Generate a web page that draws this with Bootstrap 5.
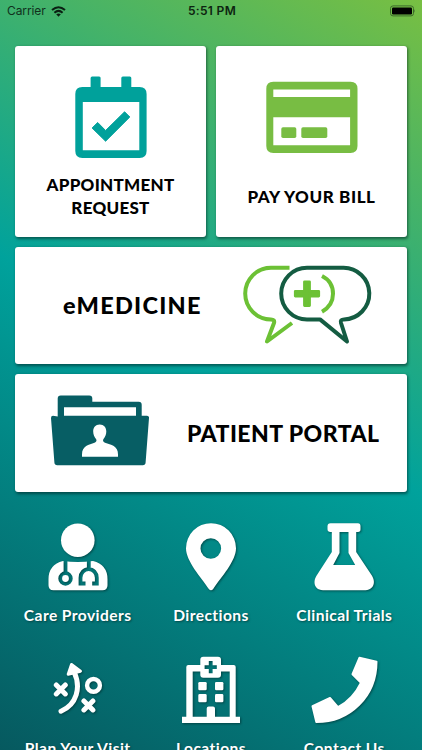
<!DOCTYPE html>
<html lang="en">
<head>
<meta charset="utf-8">
<meta name="viewport" content="width=device-width, initial-scale=1">
<title>Patient App</title>
<link href="https://cdn.jsdelivr.net/npm/bootstrap@5.3.0/dist/css/bootstrap.min.css" rel="stylesheet">
<style>
body{font-family:Lato,"Open Sans",sans-serif;background:#00a19b}
.screen{background:linear-gradient(209.6deg,#78bf42 0%,#00a29c 50%,#06595f 100%)}
.statusbar{height:22px;font:12px/22px Inter,sans-serif;color:#10301c;padding:0 7px}
.status-side{flex:1 1 0}
.carrier{letter-spacing:-.1px}
.wifi{margin-left:5px}
.clock{font-weight:600;color:#0d2410;letter-spacing:.33px;padding-left:2px}
.tiles{padding:24px 15px 0;gap:10px}
.tile-row{gap:10px}
.tile{background:#fff;border-radius:3px;box-shadow:1px 1.5px 3px rgba(0,30,30,.55);color:#000;text-decoration:none;font-weight:900}
.tile-square{height:190.5px;font-size:17px;line-height:22.5px;padding-top:30px}
.tile-wide{height:117.5px;font-size:23px;padding:0 27.5px 0 36px}
.tile-chat{padding:0 35px 0 48px}
.chat{margin-bottom:1px}
.folder{margin-bottom:5px}
.appt{letter-spacing:.27px}
.pay{letter-spacing:.6px;padding-top:8px}
.emed{font-size:23.5px;letter-spacing:1.25px}
.portal{letter-spacing:.45px}
.menu{padding:31px 11px 0}
.entry{height:133.5px;color:#fff;text-decoration:none;font-weight:700;font-size:15.6px;line-height:20px;letter-spacing:.42px;text-shadow:1px 1px 2px rgba(0,40,40,.6)}
.entry span{margin-top:14px}
.entry svg{filter:drop-shadow(1px 1px 1.2px rgba(0,40,40,.6))}
svg{display:block;flex:none}
</style>
<script src="https://cdn.jsdelivr.net/npm/bootstrap@5.3.0/dist/js/bootstrap.bundle.min.js"></script>
</head>
<body>
<div class="screen vh-100 overflow-hidden">
  <header class="statusbar d-flex align-items-center">
    <div class="status-side d-flex align-items-center">
      <span class="carrier">Carrier</span>
      <svg class="wifi" width="15" height="11" viewBox="0 0 15 11" fill="none" stroke="#0a2012" stroke-width="2"><path d="M1 4.1Q7.5-1.6 14 4.1M3.4 6.7Q7.5 3 11.6 6.7"/><path d="M5.2 8.3Q7.5 6.5 9.8 8.3L7.5 10.7Z" fill="#0a2012" stroke="none"/></svg>
    </div>
    <div class="clock">5:51 PM</div>
    <div class="status-side d-flex justify-content-end">
      <svg width="27" height="12" viewBox="0 0 27 12"><rect x="2.5" y=".9" width="23" height="10" rx="2.5" fill="none" stroke="#3d6b2b" stroke-width="1"/><rect x="4" y="2.4" width="20" height="7" rx="1.2" fill="#000"/><path d="M26.2 4.2q1.2 1.7 0 3.4Z" fill="#3d6b2b"/></svg>
    </div>
  </header>

  <main>
    <div class="tiles d-flex flex-column">
      <div class="d-flex tile-row">
        <a href="#" class="tile tile-square w-50 d-flex flex-column align-items-center text-center">
          <svg width="72" height="82" viewBox="74.7 76 72 82"><g fill="#00a19b"><rect x="90.3" y="76.5" width="10" height="14" rx="1.5"/><rect x="121" y="76.5" width="10" height="14" rx="1.5"/><path fill-rule="evenodd" d="M82 87H139.3Q146.3 87 146.3 94V151Q146.3 158 139.3 158H82Q75 158 75 151V94Q75 87 82 87ZM82.5 102V150.3H139V102Z"/><path d="M91.8 128 97.4 122.5 105.3 130.5 124.3 111.8 129.5 117 105.3 141.2Z" stroke="#00a19b" stroke-width="1" stroke-linejoin="round"/></g></svg>
          <span class="appt mt-3">APPOINTMENT<br>REQUEST</span>
        </a>
        <a href="#" class="tile tile-square w-50 d-flex flex-column align-items-center text-center">
          <svg width="92" height="78" viewBox="265.7 76 92 78"><g fill="#78bd43"><path fill-rule="evenodd" d="M273 81.7H350.2Q357.2 81.7 357.2 88.7V146Q357.2 153 350.2 153H273Q266 153 266 146V88.7Q266 81.7 273 81.7ZM273 89.5V97H349.8V89.5ZM273 117.3V145.3H349.8V117.3Z"/><rect x="281" y="127.3" width="15" height="10.7" rx="1.7"/><rect x="301" y="127.3" width="26" height="10.7" rx="1.7"/></g></svg>
          <span class="pay mt-4">PAY YOUR BILL</span>
        </a>
      </div>
      <a href="#" class="tile tile-wide tile-chat d-flex align-items-center justify-content-between">
        <span class="emed">eMEDICINE</span>
        <svg class="chat" width="130" height="80" viewBox="242 265.5 130 80" fill="none" stroke-width="4" stroke-linejoin="round"><g stroke="#6cc135"><path d="M289.5 268.3H271A25.8 25.8 0 0 0 271 319.9Q275 320 274 323.5L267 342 292 323.5M322 276.5Q333 282 333 294.3 333 306 322 312.2"/><path d="M304.5 282.3H309.5V291.8H318.7V296.6H309.5V306H304.5V296.6H295.3V291.8H304.5Z" fill="#6cc135" stroke-width="2.8"/></g><path stroke="#145c42" d="M307 319.9H320L347 342 341 323.5Q340 319.9 344 319.9A25.8 25.8 0 0 0 343 268.3H307A25.8 25.8 0 0 0 307 319.9Z"/></svg>
      </a>
      <a href="#" class="tile tile-wide d-flex align-items-center justify-content-between">
        <svg class="folder" width="98" height="71" viewBox="51 395.5 98 71"><path fill="#075e64" fill-rule="evenodd" d="M57.7 417V399Q57.7 396 60.7 396H89.3Q92.3 396 92.3 399V402.3H138.7Q141.7 402.3 141.7 405.3V416.3H147Q149.2 416.3 149 418.5L145.6 463Q145.4 465.7 142.8 465.7H57.2Q54.6 465.7 54.4 463L51 418.5Q51 416.3 53 416.3ZM64 407.7V416.3H136V407.7Z"/><path fill="#fff" d="M99.7 425C104 425 106.3 428 106.3 432 106.3 435.5 105 437.5 103.5 439.5 102.5 441 103 442.3 105 443.3 111 445.5 118 446 118 455V457.3H82V455C82 446 89 445.5 94.5 443.3 96.5 442.3 97 441 96 439.5 94.5 437.5 93.2 435.5 93.2 432 93.2 428 95.5 425 99.7 425Z"/></svg>
        <span class="portal">PATIENT PORTAL</span>
      </a>
    </div>

    <nav class="menu row row-cols-3 g-0" aria-label="Sections">
      <a href="#" class="col entry d-flex flex-column align-items-center">
        <svg width="60" height="68" viewBox="47.5 522.8 60 68"><mask id="scope"><path fill="#fff" d="M40 515H115V600H40Z"/><g fill="none" stroke="#000" stroke-width="3.8"><circle cx="65" cy="578.3" r="5.3"/><path d="M65 558V573.5M88.3 558V568M85 583.3H80V577.5A8 8.5 0 0 1 96.3 577.5V583.3H91.7"/></g></mask><circle cx="77.3" cy="540" r="16.8" fill="#fff"/><path mask="url(#scope)" fill="#fff" d="M62.5 560.8Q77 563 92.5 560.8 107 564.5 107 579V585Q107 590 102 590H53Q48 590 48 585V579Q48 564.5 62.5 560.8Z"/></svg>
        <span>Care Providers</span>
      </a>
      <a href="#" class="col entry d-flex flex-column align-items-center">
        <svg width="52" height="68" viewBox="185 522.8 52 68"><path fill="#fff" fill-rule="evenodd" d="M211 523A25 25 0 0 1 236 548C236 561 221 577 213 589Q211 591 209 589C201 577 186 561 186 548A25 25 0 0 1 211 523ZM210.8 538A10.3 10.3 0 1 0 210.8 558.6 10.3 10.3 0 1 0 210.8 538Z"/></svg>
        <span>Directions</span>
      </a>
      <a href="#" class="col entry d-flex flex-column align-items-center">
        <svg width="60" height="68" viewBox="314.5 522.8 60 68"><path fill="#fff" fill-rule="evenodd" d="M331 523H358.5Q361 523 361 526V529Q361 531.7 358.5 531.7H356.7V551.7L372.5 575.5C377 583 373 590 366 590H323.5C316 590 312.5 583 317 575.5L332.3 551.7V531.7H331Q328 531.7 328 529V526Q328 523 331 523ZM340 531.7V552.7L333.7 564.7H355.7L349 552.7V531.7Z"/></svg>
        <span>Clinical Trials</span>
      </a>
      <a href="#" class="col entry d-flex flex-column align-items-center">
        <svg width="60" height="68" viewBox="47.5 656.3 60 68"><g fill="none" stroke="#fff" stroke-width="5" stroke-linecap="round" stroke-linejoin="round"><path d="M73.5 672C81 688 76 705 60.5 711.5"/><path fill="#fff" stroke-width="3" d="M71 664.8 80 671.5 67.7 674.5Z"/><path d="M55.8 685.2 64.8 694.2M64.8 685.2 55.8 694.2M83.4 701.2 92.4 710.2M92.4 701.2 83.4 710.2"/><circle cx="93" cy="685.7" r="6.4" stroke-width="4.4"/></g></svg>
        <span>Plan Your Visit</span>
      </a>
      <a href="#" class="col entry d-flex flex-column align-items-center">
        <svg width="60" height="68" viewBox="181 656.3 60 68"><g fill="#fff"><path fill-rule="evenodd" d="M200.3 665.3V660Q200.3 657 203.3 657H218Q221 657 221 660V665.3H233.7Q235.7 665.3 235.7 667.3V717H240V723.3H182V717H186.3V667.3Q186.3 665.3 188.3 665.3ZM192.7 671.7V717H206.7V708.7Q206.7 706.7 208.7 706.7H213Q215 706.7 215 708.7V717H229.7V671.7H221V675Q221 678 218 678H203.3Q200.3 678 200.3 675V671.7ZM208.8 661.3V665.5H204.6V669.3H208.8V673.5H212.6V669.3H216.8V665.5H212.6V661.3Z"/><rect x="198.3" y="682.3" width="8.4" height="8.2" rx="1.3"/><rect x="215" y="682.3" width="8.4" height="8.2" rx="1.3"/><rect x="198.3" y="694.4" width="8.4" height="8.2" rx="1.3"/><rect x="215" y="694.4" width="8.4" height="8.2" rx="1.3"/></g></svg>
        <span>Locations</span>
      </a>
      <a href="#" class="col entry d-flex flex-column align-items-center">
        <svg width="68" height="68" viewBox="310.5 656.3 68 68"><path fill="#fff" stroke="#fff" stroke-width="2" stroke-linejoin="round" d="M360 658 377 662C377 697 350 722.5 316.8 722.4L313 706.5 330.5 698.3 338.5 707.5C347 703 355.5 695.5 361.5 683L353 674.5Z"/></svg>
        <span>Contact Us</span>
      </a>
    </nav>
  </main>
</div>
</body>
</html>
